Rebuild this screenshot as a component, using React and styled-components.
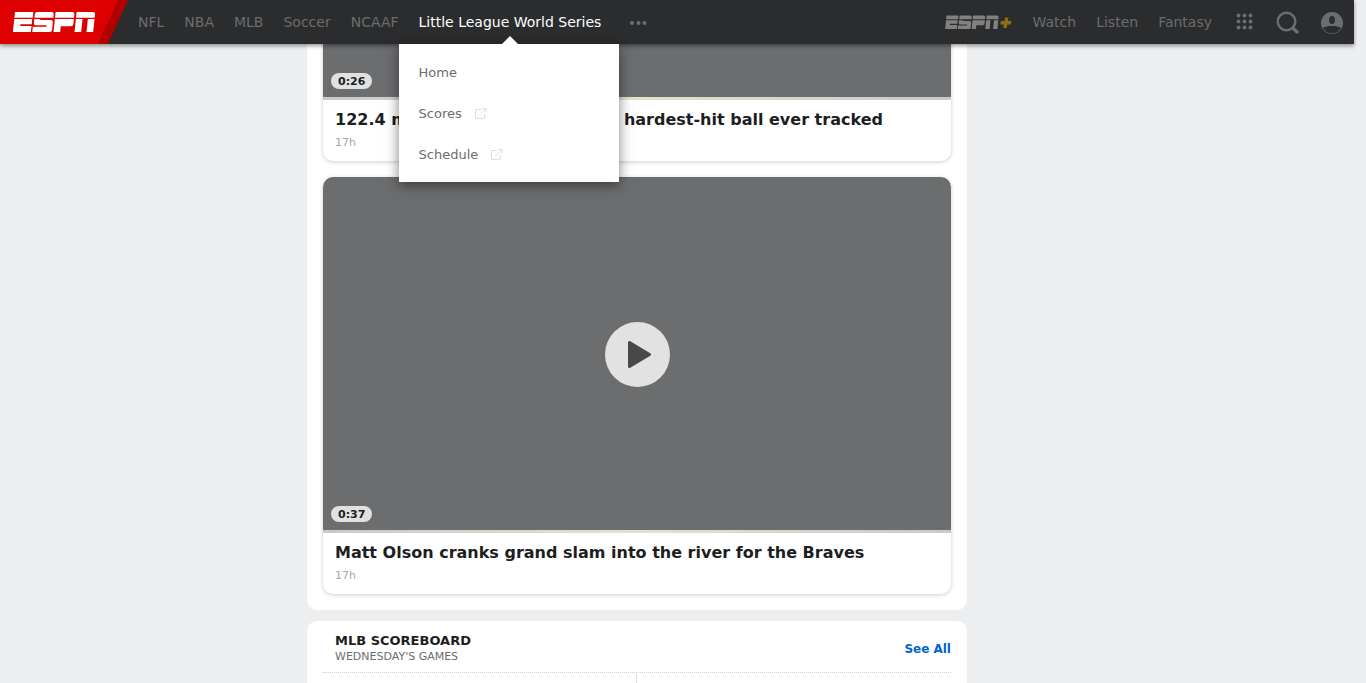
import React from "react";
import styled, { createGlobalStyle } from "styled-components";

const GlobalStyle = createGlobalStyle`
  *, *::before, *::after { box-sizing: border-box; }
  body {
    margin: 0;
    overflow: hidden;
    background: #edeef0;
    color: #1d1e1f;
    font-family: "DejaVu Sans", sans-serif;
  }
  a { color: inherit; text-decoration: none; }
  h1, h2, p, ul { margin: 0; padding: 0; }
  ul { list-style: none; }
  button { font: inherit; color: inherit; padding: 0; border: 0; background: none; cursor: pointer; }
  svg { display: block; }
`;

const Page = styled.div`
  height: 100vh;
  overflow: hidden;
`;

const Header = styled.header`
  position: relative;
  z-index: 2;
  display: flex;
  align-items: center;
  height: 44px;
  margin-right: 12px;
  background: #2b2c2d;
  color: #6c6d6f;
  box-shadow: 0 2px 4px rgba(0, 0, 0, 0.4);
`;

const LogoLink = styled.a`
  flex: none;
  width: 128px;
  height: 44px;
`;

const NavList = styled.ul`
  display: flex;
  flex: 1;
`;

const NavItem = styled.li`
  position: relative;
`;

const NavLink = styled.a`
  display: block;
  padding: 0 10px;
  font-size: 14px;
  line-height: 44px;
  white-space: nowrap;
  color: ${(p) => (p.$active ? "#fff" : "inherit")};
`;

const MoreButton = styled.button`
  display: flex;
  align-items: center;
  height: 44px;
  padding: 2px 19px 0;
`;

const Actions = styled.div`
  display: flex;
  align-items: center;
`;

const PlusLink = styled.a`
  padding: 0 11px 0 10px;
`;

const Tools = styled.div`
  display: flex;
  align-items: center;
  gap: 22px;
  padding: 0 11px 0 14px;
`;

const Menu = styled.ul`
  position: absolute;
  top: 44px;
  left: -10px;
  width: 220px;
  padding: 8px 0 7px;
  background: #fff;
  box-shadow: 0 3px 12px rgba(0, 0, 0, 0.5);
  clip-path: inset(-8px -20px -20px -20px);

  &::before {
    content: "";
    position: absolute;
    left: 103px;
    bottom: 100%;
    border: 8px solid transparent;
    border-top: 0;
    border-bottom-color: #fff;
  }
`;

const MenuLink = styled.a`
  display: flex;
  align-items: center;
  gap: 13px;
  padding: 0 20px;
  font-size: 13px;
  line-height: 41px;
  color: #6c6d6f;
`;

const Column = styled.div`
  display: flex;
  justify-content: center;
  padding-right: 92px;
`;

const Stack = styled.main`
  display: flex;
  flex-direction: column;
  gap: 11px;
  width: 100%;
  max-width: 660px;
  margin-top: -316px;
`;

const Panel = styled.section`
  padding: ${(p) => (p.$board ? "0 16px" : "16px")};
  border-radius: 10px;
  background: #fff;
`;

const Videos = styled(Panel)`
  display: flex;
  flex-direction: column;
  gap: 16px;
`;

const Card = styled.article`
  overflow: hidden;
  border-radius: 10px;
  background: #fff;
  box-shadow: 0 1px 4px rgba(0, 0, 0, 0.2);
`;

const Player = styled.div`
  position: relative;
  display: flex;
  align-items: center;
  justify-content: center;
  height: 353px;
  padding-top: 2px;
  background: #6c6d6f;
`;

const PlayButton = styled.button`
  border-radius: 50%;
`;

const Duration = styled.span`
  position: absolute;
  left: 8px;
  bottom: 8px;
  height: 16px;
  padding: 0 7px;
  border-radius: 8px;
  background: #e1e1e1;
  font-size: 11px;
  font-weight: 700;
  line-height: 18px;
`;

const Stripe = styled.div`
  height: 3px;
  background: linear-gradient(90deg, ${(p) => p.$edge}, #e2e3c8 50%, #c8c9cb);
`;

const Caption = styled.div`
  padding: 10px 12px;
`;

const Title = styled.h1`
  font-size: 16px;
  line-height: 20px;
`;

const Age = styled.p`
  height: 21px;
  padding-top: 5px;
  font-size: 11px;
  line-height: 16px;
  color: #a5a6a7;
`;

const BoardHeader = styled.header`
  display: flex;
  align-items: center;
  justify-content: space-between;
  height: 52px;
  padding: 4px 0 0 12px;
  border-bottom: 1px dotted #cdcecf;
`;

const BoardTitle = styled.h2`
  font-size: 13px;
  line-height: 16px;
`;

const BoardDay = styled.p`
  font-size: 11px;
  line-height: 16px;
  color: #6c6d6f;
`;

const SeeAll = styled.a`
  font-size: 12px;
  font-weight: 700;
  line-height: 16px;
  color: #06c;
`;

const Games = styled.div`
  display: grid;
  grid-template-columns: 1fr 1fr;
  height: 120px;
`;

const Game = styled.div`
  &:first-child { border-right: 1px solid #dcdddf; }
`;

function Wordmark() {
  return (
    <g transform="skewX(-6)">
      <path d="M0 0h55v17H0zM0 21h54v16H20v5h34v18H0z" />
      <path d="M67 0h43q7 0 7 7v10H60V7q0-7 7-7zM60 21h18v3h32q7 0 7 7v22q0 7-7 7H58V44h41v-4H67q-7 0-7-7z" />
      <path d="M122 0h50q7 0 7 7v10h-57zM122 21h57v14q0 8-7 8h-30v17h-20z" />
      <path d="M185 0h49q7 0 7 7v10h-56zM185 21h20v39h-20zM221 21h20v39h-20z" />
    </g>
  );
}

function EspnLogo() {
  return (
    <svg width="128" height="44" aria-hidden="true">
      <path fill="#b10000" d="M0 0h128l-20 44H0z" />
      <path fill="#d00" d="M0 0h118l-20 44H0z" />
      <g fill="#fff" transform="translate(15 12) scale(.333)"><Wordmark /></g>
    </svg>
  );
}

function PlusLogo() {
  return (
    <svg width="67" height="16" aria-hidden="true">
      <g fill="#818181" transform="translate(1.5 1.5) scale(.217 .225)"><Wordmark /></g>
      <path fill="#8f6c16" d="M60 3.500h3.500l-.6 3.500H66.500l-.6 3.500h-3.600l-.6 3.500h-3.500l.6-3.500H55.300l.6-3.500h3.500z" />
    </svg>
  );
}

function ExternalIcon() {
  return (
    <svg width="12" height="12" fill="none" stroke="#dcdddf" aria-hidden="true">
      <path d="M6 1.500H.5v9h9V6M7 .5h4v4M11 .5 4.500 7" />
    </svg>
  );
}

function DotsIcon() {
  return (
    <svg width="17" height="4" fill="currentColor" aria-hidden="true">
      {[2, 8.500, 14.500].map((x) => <circle key={x} cx={x} cy="2" r="2" />)}
    </svg>
  );
}

function GridIcon() {
  return (
    <svg width="17" height="18" fill="currentColor" aria-hidden="true">
      {[2.500, 8.500, 14.500].map((y) => [2.500, 8.500, 14.500].map((x) => (
        <circle key={`${x}-${y}`} cx={x} cy={y} r="1.900" />
      )))}
    </svg>
  );
}

function SearchIcon() {
  return (
    <svg width="24" height="24" fill="none" stroke="currentColor" aria-hidden="true">
      <circle cx="11.500" cy="11.500" r="8.800" strokeWidth="2.400" />
      <path d="m18 18 4 4" strokeWidth="3.500" strokeLinecap="round" />
    </svg>
  );
}

function UserIcon() {
  return (
    <svg width="22" height="24" aria-hidden="true">
      <circle cx="11" cy="13" r="11" fill="currentColor" />
      <ellipse cx="11" cy="10" rx="2.900" ry="4.100" fill="#2b2c2d" />
      <path fill="#2b2c2d" d="M1.900 17.800C4.500 16.600 7.500 16 11 16s6.500.6 9.100 1.800A10.200 10.200 0 0 1 1.900 17.800z" />
    </svg>
  );
}

function PlayIcon() {
  return (
    <svg width="65" height="65" aria-hidden="true">
      <circle cx="32.500" cy="32.500" r="32.500" fill="#e2e2e2" />
      <path d="M24.500 20.500v24L44.500 32.500z" fill="#48494a" stroke="#48494a" strokeWidth="3" strokeLinejoin="round" />
    </svg>
  );
}

const sports = ["NFL", "NBA", "MLB", "Soccer", "NCAAF"];
const menu = [
  { label: "Home" },
  { label: "Scores", external: true },
  { label: "Schedule", external: true },
];
const videos = [
  { time: "0:26", title: "122.4 mph Oneil Cruz hammers hardest-hit ball ever tracked", age: "17h", edge: "#cccacb" },
  { time: "0:37", title: "Matt Olson cranks grand slam into the river for the Braves", age: "17h", edge: "#c8c9cb" },
];

export default function App() {
  return (
    <Page>
      <GlobalStyle />
      <Header>
        <LogoLink href="#" aria-label="ESPN"><EspnLogo /></LogoLink>
        <NavList>
          {sports.map((s) => (
            <NavItem key={s}><NavLink href="#">{s}</NavLink></NavItem>
          ))}
          <NavItem>
            <NavLink href="#" $active>Little League World Series</NavLink>
            <Menu>
              {menu.map((m) => (
                <li key={m.label}>
                  <MenuLink href="#">{m.label}{m.external && <ExternalIcon />}</MenuLink>
                </li>
              ))}
            </Menu>
          </NavItem>
          <NavItem><MoreButton aria-label="More sports"><DotsIcon /></MoreButton></NavItem>
        </NavList>
        <Actions>
          <PlusLink href="#" aria-label="ESPN+"><PlusLogo /></PlusLink>
          <NavLink href="#">Watch</NavLink>
          <NavLink href="#">Listen</NavLink>
          <NavLink href="#">Fantasy</NavLink>
          <Tools>
            <button aria-label="Apps"><GridIcon /></button>
            <button aria-label="Search"><SearchIcon /></button>
            <button aria-label="Account"><UserIcon /></button>
          </Tools>
        </Actions>
      </Header>
      <Column>
        <Stack>
          <Videos>
            {videos.map((v) => (
              <Card key={v.time}>
                <Player>
                  <PlayButton aria-label={`Play ${v.title}`}><PlayIcon /></PlayButton>
                  <Duration>{v.time}</Duration>
                </Player>
                <Stripe $edge={v.edge} />
                <Caption>
                  <Title>{v.title}</Title>
                  <Age>{v.age}</Age>
                </Caption>
              </Card>
            ))}
          </Videos>
          <Panel $board>
            <BoardHeader>
              <div>
                <BoardTitle>MLB SCOREBOARD</BoardTitle>
                <BoardDay>WEDNESDAY'S GAMES</BoardDay>
              </div>
              <SeeAll href="#">See All</SeeAll>
            </BoardHeader>
            <Games><Game /><Game /></Games>
          </Panel>
        </Stack>
      </Column>
    </Page>
  );
}
